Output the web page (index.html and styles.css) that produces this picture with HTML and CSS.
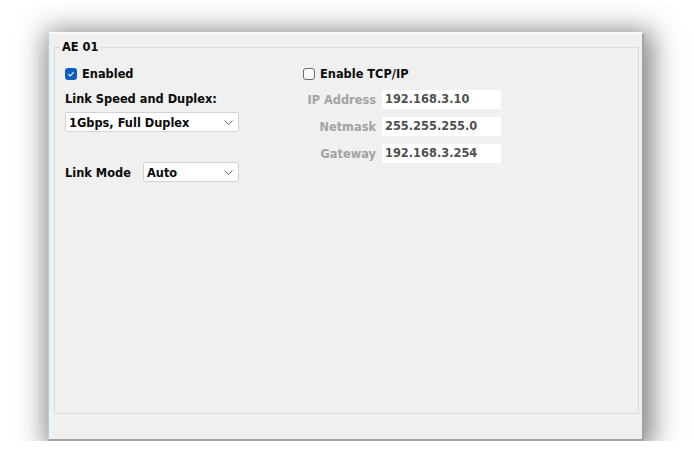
FILE: index.html
```html
<!DOCTYPE html>
<html>
<head>
<meta charset="utf-8">
<link rel="stylesheet" href="styles.css">
</head>
<body>
<div class="window">
  <fieldset class="group">
    <legend class="group-title">AE 01</legend>
    <div class="cols">
      <div class="col col-left">
        <div class="check">
          <span class="box box-on"><svg width="12" height="12" viewBox="0 0 12 12"><path d="M3.4 6.2 L5.2 7.9 L8.6 4.3" fill="none" stroke="#fff" stroke-width="1.1"/></svg></span>
          <span>Enabled</span>
        </div>
        <div class="field-label">Link Speed and Duplex:</div>
        <div class="select select-wide">
          <span>1Gbps, Full Duplex</span>
          <svg class="chev" width="9" height="5" viewBox="0 0 9 5"><path d="M0.5 0.5 L4.5 4.5 L8.5 0.5" fill="none" stroke="#666" stroke-width="1"/></svg>
        </div>
        <div class="mode-row">
          <span class="mode-label">Link Mode</span>
          <div class="select select-narrow">
            <span>Auto</span>
            <svg class="chev" width="9" height="5" viewBox="0 0 9 5"><path d="M0.5 0.5 L4.5 4.5 L8.5 0.5" fill="none" stroke="#666" stroke-width="1"/></svg>
          </div>
        </div>
      </div>
      <div class="col col-right">
        <div class="check">
          <span class="box"></span>
          <span>Enable TCP/IP</span>
        </div>
        <div class="ip-grid">
          <span class="ip-label">IP Address</span><div class="ip-input">192.168.3.10</div>
          <span class="ip-label">Netmask</span><div class="ip-input">255.255.255.0</div>
          <span class="ip-label">Gateway</span><div class="ip-input">192.168.3.254</div>
        </div>
      </div>
    </div>
  </fieldset>
</div>
</body>
</html>
```
FILE: styles.css
```css
html, body {
  margin: 0;
  padding: 0;
  background: #ffffff;
}
body {
  padding: 32px 0 0 48px;
  font-family: "DejaVu Sans", Verdana, sans-serif;
  font-size: 11.4px;
  font-weight: bold;
  color: #0a0a0a;
}
.window {
  box-sizing: border-box;
  width: 596px;
  height: 409px;
  background: #f0f0f0;
  border-left: 1px solid #a8d2f2;
  border-top: 2px solid #fafafa;
  border-right: 2px solid #a3a3a3;
  border-bottom: 2px solid #a3a3a3;
  box-shadow: 3px 4px 26px 5px rgba(0, 0, 0, 0.5);
  padding: 6px 3px 0 5px;
}
.group {
  box-sizing: border-box;
  margin: 0;
  height: 374px;
  border: 1px solid #dadada;
  padding: 13px 10px 0 10px;
  min-width: 0;
}
.group-title {
  padding: 0 2px;
  margin-left: -5px;
  line-height: 14px;
}
.cols {
  display: flex;
}
.col-left {
  width: 238px;
  display: flex;
  flex-direction: column;
}
.col-right {
  display: flex;
  flex-direction: column;
}
.check {
  display: flex;
  align-items: center;
  height: 13px;
  gap: 5px;
}
.box {
  box-sizing: border-box;
  width: 12px;
  height: 12px;
  border: 1px solid #6a6a6a;
  border-radius: 3px;
  background: #fbfbfb;
  display: flex;
}
.box-on {
  border: none;
  background: #0a5fc0;
}
.field-label {
  margin-top: 13px;
  line-height: 13px;
}
.select {
  box-sizing: border-box;
  height: 20px;
  background: #fff;
  border: 1px solid #d2d2d2;
  border-radius: 2px;
  display: flex;
  align-items: center;
  justify-content: space-between;
  padding: 1px 5px 0 3px;
}
.select-wide {
  margin-top: 6px;
  width: 174px;
}
.select-narrow {
  width: 96px;
}
.chev {
  display: block;
  margin-top: -1px;
}
.mode-row {
  margin-top: 30px;
  display: flex;
  align-items: center;
  justify-content: space-between;
  width: 174px;
}
.mode-label {
  padding-top: 1px;
}
.ip-grid {
  margin-top: 10px;
  display: grid;
  grid-template-columns: 73px 119px;
  column-gap: 6px;
  row-gap: 8px;
  align-items: center;
}
.ip-label {
  text-align: right;
  color: #a3a3a3;
}
.ip-input {
  height: 19px;
  background: #fff;
  color: #505050;
  line-height: 19px;
  padding-left: 3px;
}
```
